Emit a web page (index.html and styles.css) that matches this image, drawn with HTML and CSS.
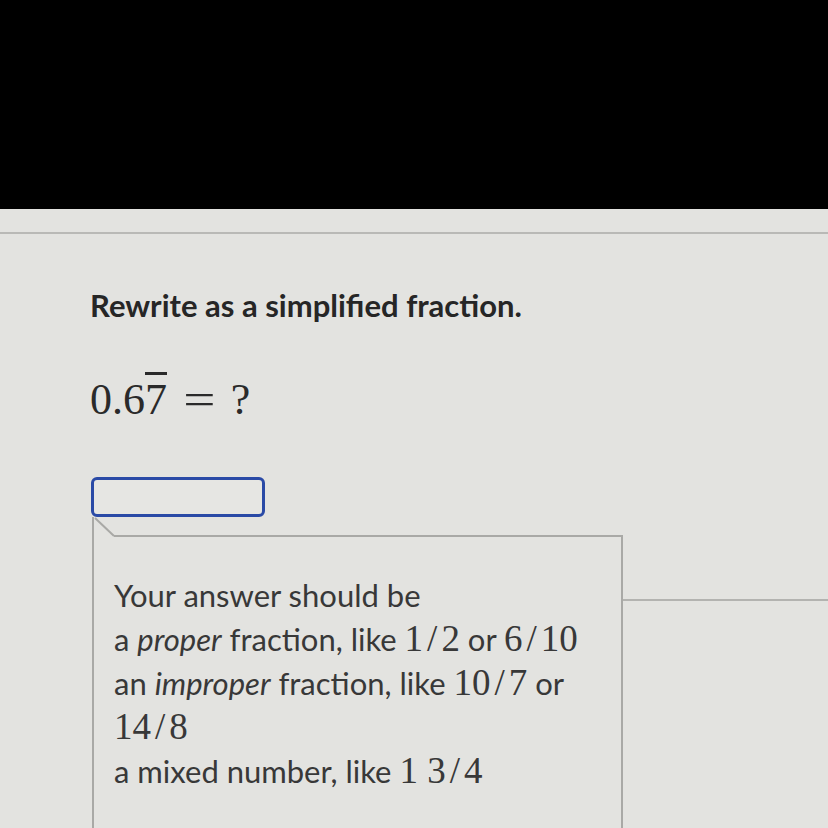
FILE: index.html
```html
<!DOCTYPE html>
<html lang="en">
<head>
    <meta charset="UTF-8">
    <title>Rewrite as a simplified fraction</title>
    <link rel="stylesheet" href="styles.css">
</head>
<body>

    <!-- dark top band -->
    <div class="bezel"></div>
    <div class="topbar"></div>

    <div class="content">
        <h1 class="question">Rewrite as a simplified fraction.</h1>

        <p class="math">0.6<span class="repeat">7</span><span class="eq">=</span>?</p>

        <div class="answer"></div>

        <!-- hint box -->
        <div class="hint-row">
            <div class="hint">
                <svg class="hint-notch" width="531" height="20" viewBox="0 0 531 20">
                    <line x1="1" y1="0" x2="1" y2="20" stroke="#a9a9a6" stroke-width="2"/>
                    <line x1="3" y1="1" x2="22" y2="19" stroke="#a9a9a6" stroke-width="2"/>
                    <line x1="22" y1="19" x2="531" y2="19" stroke="#a9a9a6" stroke-width="2"/>
                    <line x1="530" y1="18" x2="530" y2="20" stroke="#a9a9a6" stroke-width="2"/>
                </svg>
                <div class="hint-body">
                    <p>Your answer should be</p>
                    <p>a <em>proper</em> fraction, like <span class="num">1<span class="slash">/</span>2</span> or <span class="num">6<span class="slash">/</span>10</span></p>
                    <p>an <em>improper</em> fraction, like <span class="num">10<span class="slash">/</span>7</span> or <span class="num">14<span class="slash">/</span>8</span></p>
                    <p>a mixed number, like <span class="num">1 3<span class="slash">/</span>4</span></p>
                </div>
            </div>
            <div class="rule"></div>
        </div>
    </div>

</body>
</html>
```

FILE: styles.css
```css
/* 全体 */
body {
    margin: 0;
    background-color: #e3e3e0;
    color: #2b2b2b;
    font-family: 'Lato', 'Liberation Sans', sans-serif;
    overflow: hidden;
}

.bezel {
    height: 209px;
    background-color: #000;
}

.topbar {
    height: 23px;
    border-bottom: 2px solid #b9b9b6;
}

.content {
    padding-left: 90px;
}

/* 問題文 */
.question {
    margin: 53px 0 0;
    font-size: 31px;
    line-height: 36px;
    font-weight: bold;
    color: #262626;
}

.math {
    margin: 51px 0 0;
    font-family: 'Liberation Serif', 'DejaVu Serif', serif;
    font-size: 44px;
    line-height: 52px;
    color: #2a2a2a;
}

.repeat {
    text-decoration: overline;
    text-decoration-thickness: 3px;
}

.eq {
    display: inline-block;
    margin: 0 19px 0 20px;
    transform: scaleX(1.3);
}

/* 入力欄 */
.answer {
    width: 168px;
    height: 34px;
    margin-top: 51px;
    margin-left: 1px;
    border: 3.5px solid #2a4aa6;
    border-radius: 6px;
    background-color: #e6e6e3;
}

/* ヒント */
.hint-row {
    display: flex;
    margin-left: 2px;
}

.hint {
    width: 531px;
    flex-shrink: 0;
}

.hint-notch {
    display: block;
}

.hint-body {
    border-left: 2px solid #a9a9a6;
    border-right: 2px solid #a9a9a6;
    padding: 36px 30px 60px 20px;
    font-size: 31px;
    line-height: 44px;
    color: #383838;
}

.hint-body p {
    margin: 0;
}

.num {
    font-family: 'Liberation Serif', 'DejaVu Serif', serif;
    font-size: 37px;
}

.slash {
    margin: 0 4px;
}

.rule {
    flex: 1;
    height: 0;
    margin-top: 82px;
    border-top: 2px solid #b3b3b0;
}
```
